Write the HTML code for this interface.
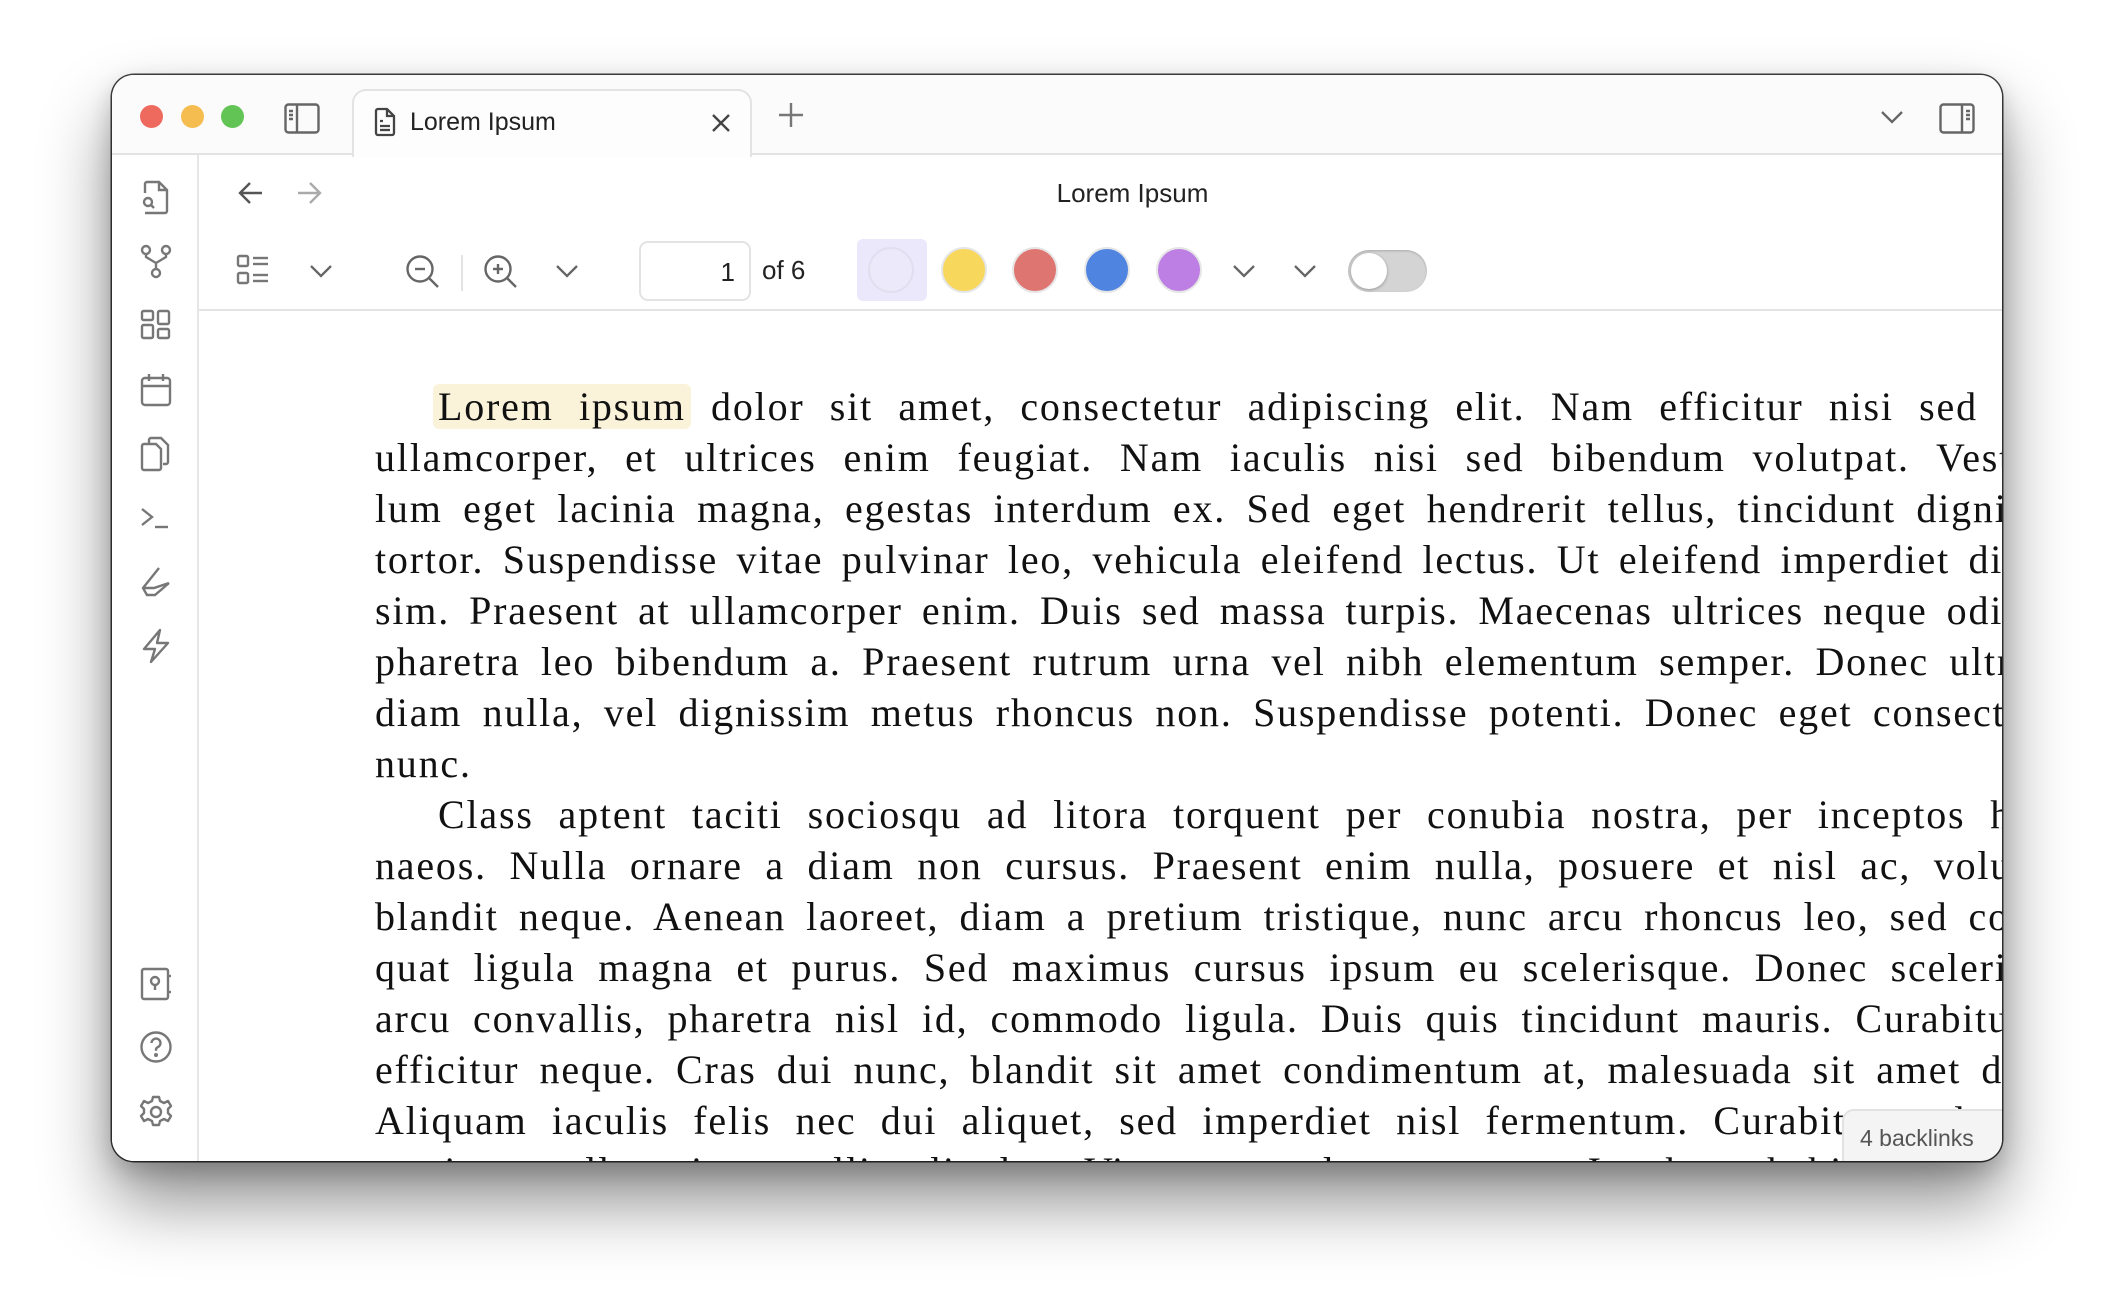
<!DOCTYPE html>
<html><head><meta charset="utf-8">
<style>
*{margin:0;padding:0;box-sizing:border-box}
html,body{width:2114px;height:1310px;background:#fff;overflow:hidden;font-family:"Liberation Sans",sans-serif}
.win{position:absolute;left:112px;top:75px;width:1890px;height:1086px;border-radius:22px;background:#fff;overflow:hidden;box-shadow:0 0 0 1.5px rgba(0,0,0,.75),0 40px 70px rgba(0,0,0,.45),0 10px 25px rgba(0,0,0,.2)}
.tabbar{position:absolute;left:0;top:0;width:100%;height:80px;background:#fbfbfb;border-bottom:2px solid #e3e3e3}
.dot{position:absolute;top:30px;width:23px;height:23px;border-radius:50%}
.tab{position:absolute;left:240px;top:14px;width:400px;height:68px;background:#fdfdfd;border:2px solid #e3e3e3;border-bottom:none;border-radius:14px 14px 0 0}
.tab span{position:absolute;left:56px;top:17px;font-size:25px;color:#222}
.rib{position:absolute;left:0;top:80px;width:87px;bottom:0;border-right:2px solid #e6e6e6;background:#fff}
.ic{position:absolute}
svg{overflow:visible}
.nav{position:absolute;left:87px;top:80px;right:0;height:156px;border-bottom:2px solid #e3e3e3}
.title{position:absolute;left:0;right:0;top:23px;text-align:center;font-size:26px;color:#222;padding-left:64px}
.txt{position:absolute;left:263px;top:0;font-family:"Liberation Serif",serif;font-size:40px;color:#111;letter-spacing:1.8px}
.l{position:absolute;left:0;width:1650px;white-space:nowrap;text-align:justify;text-align-last:justify;line-height:51px;height:51px}
.hl{background:#fbf3d9;border-radius:6px;padding:0 5px;margin:0 -5px}
.bl{position:absolute;left:1730px;top:1034px;width:170px;height:60px;background:#f4f4f4;border:2px solid #e2e2e2;border-radius:12px 0 0 0;font-size:23px;color:#555;padding:14px 0 0 16px}
.sw{position:absolute;width:46px;height:46px;border-radius:50%;border:2px solid #e6e6e6}
</style></head><body>
<div class="win">
 <div class="tabbar">
  <div class="dot" style="left:28px;background:#ee6a5f"></div>
  <div class="dot" style="left:69px;background:#f5bd4f"></div>
  <div class="dot" style="left:109px;background:#61c454"></div>
  <svg class="ic" style="left:172px;top:28px" width="36" height="32" viewBox="0 0 36 32" fill="none" stroke="#666" stroke-width="2.4"><rect x="1.5" y="1.5" width="33" height="28" rx="3"/><line x1="13" y1="2" x2="13" y2="29"/><line x1="5" y1="8" x2="9" y2="8"/><line x1="5" y1="12" x2="9" y2="12"/><line x1="5" y1="16" x2="9" y2="16"/></svg>
  <div class="tab">
   <svg class="ic" style="left:20px;top:17px" width="22" height="28" viewBox="0 0 22 28" fill="none" stroke="#444" stroke-width="2.3"><path d="M2 3a2 2 0 0 1 2-2h9l7 7v17a2 2 0 0 1-2 2H4a2 2 0 0 1-2-2z"/><path d="M13 1v7h7"/><line x1="6" y1="13" x2="9" y2="13"/><line x1="6" y1="18" x2="16" y2="18"/><line x1="6" y1="22" x2="16" y2="22"/></svg>
   <span>Lorem Ipsum</span>
   <svg class="ic" style="left:357px;top:22px" width="20" height="20" viewBox="0 0 20 20" stroke="#444" stroke-width="2.4"><line x1="2" y1="2" x2="18" y2="18"/><line x1="18" y1="2" x2="2" y2="18"/></svg>
  </div>
  <svg class="ic" style="left:666px;top:27px" width="26" height="26" viewBox="0 0 26 26" stroke="#777" stroke-width="2.4"><line x1="13" y1="1" x2="13" y2="25"/><line x1="1" y1="13" x2="25" y2="13"/></svg>
  <svg class="ic" style="left:1769px;top:35px" width="22" height="14" viewBox="0 0 22 14" fill="none" stroke="#666" stroke-width="2.3"><path d="M1 2l10 10 10-10"/></svg>
  <svg class="ic" style="left:1827px;top:28px" width="36" height="32" viewBox="0 0 36 32" fill="none" stroke="#666" stroke-width="2.4"><rect x="1.5" y="1.5" width="33" height="28" rx="3"/><line x1="23" y1="2" x2="23" y2="29"/><line x1="27" y1="8" x2="31" y2="8"/><line x1="27" y1="12" x2="31" y2="12"/><line x1="27" y1="16" x2="31" y2="16"/></svg>
 </div>
 <div class="rib">
  <svg class="ic" style="left:29px;top:26px" width="30" height="34" viewBox="0 0 30 34" fill="none" stroke="#777" stroke-width="2.4"><path d="M4 12V3a2 2 0 0 1 2-2h12l8 8v21a2 2 0 0 1-2 2H4"/><path d="M18 1v8h8"/><circle cx="7" cy="21" r="4"/><line x1="10" y1="24" x2="13" y2="27"/></svg>
  <svg class="ic" style="left:28px;top:90px" width="32" height="34" viewBox="0 0 32 34" fill="none" stroke="#777" stroke-width="2.4"><circle cx="6" cy="5" r="4"/><circle cx="26" cy="5" r="4"/><circle cx="16" cy="28" r="4"/><path d="M6 9v3l10 6 10-6V9M16 18v6"/></svg>
  <svg class="ic" style="left:29px;top:155px" width="30" height="30" viewBox="0 0 30 30" fill="none" stroke="#777" stroke-width="2.4"><rect x="1" y="1" width="11" height="9" rx="1.5"/><rect x="17" y="1" width="11" height="13" rx="1.5"/><rect x="1" y="15" width="11" height="13" rx="1.5"/><rect x="17" y="19" width="11" height="9" rx="1.5"/></svg>
  <svg class="ic" style="left:29px;top:219px" width="30" height="32" viewBox="0 0 30 32" fill="none" stroke="#777" stroke-width="2.4"><rect x="1" y="4" width="28" height="27" rx="3"/><line x1="1" y1="12" x2="29" y2="12"/><line x1="8" y1="0" x2="8" y2="7"/><line x1="22" y1="0" x2="22" y2="7"/></svg>
  <svg class="ic" style="left:29px;top:282px" width="28" height="34" viewBox="0 0 28 34" fill="none" stroke="#777" stroke-width="2.4"><path d="M8 6V3a2 2 0 0 1 2-2h10l7 7v17a2 2 0 0 1-2 2h-3"/><path d="M1 9a2 2 0 0 1 2-2h12l5 5v19a2 2 0 0 1-2 2H3a2 2 0 0 1-2-2z"/></svg>
  <svg class="ic" style="left:29px;top:352px" width="28" height="22" viewBox="0 0 28 22" fill="none" stroke="#777" stroke-width="2.4"><path d="M1 2l10 8-10 8"/><line x1="14" y1="20" x2="27" y2="20"/></svg>
  <svg class="ic" style="left:29px;top:412px" width="30" height="30" viewBox="0 0 30 30" fill="none" stroke="#777" stroke-width="2.4"><path d="M18 1L2 21l4 7h8l14-12"/><path d="M2 21h11l15-5"/></svg>
  <svg class="ic" style="left:31px;top:474px" width="26" height="34" viewBox="0 0 26 34" fill="none" stroke="#777" stroke-width="2.4" stroke-linejoin="round"><path d="M17 1L1 20h11l-4 13 17-19H14z"/></svg>
  <svg class="ic" style="left:29px;top:813px" width="30" height="32" viewBox="0 0 30 32" fill="none" stroke="#777" stroke-width="2.4"><rect x="1" y="1" width="26" height="30" rx="2"/><circle cx="14" cy="13" r="4"/><line x1="14" y1="17" x2="14" y2="22"/><line x1="27" y1="8" x2="30" y2="8"/><line x1="27" y1="24" x2="30" y2="24"/></svg>
  <svg class="ic" style="left:28px;top:876px" width="32" height="32" viewBox="0 0 32 32" fill="none" stroke="#777" stroke-width="2.4"><circle cx="16" cy="16" r="14.5"/><path d="M11.5 12a4.5 4.5 0 1 1 6 4.3c-1 .5-1.5 1.3-1.5 2.5v1"/><circle cx="16" cy="24" r=".8" fill="#777"/></svg>
  <svg class="ic" style="left:28px;top:941px" width="32" height="32" viewBox="0 0 32 32" fill="none" stroke="#777" stroke-width="2.4" stroke-linejoin="round"><path d="M13 1h6l1 4 4 2 4-2 3 5-3 3v4l3 3-3 5-4-2-4 2-1 4h-6l-1-4-4-2-4 2-3-5 3-3v-4L1 10l3-5 4 2 4-2z"/><circle cx="16" cy="16" r="5"/></svg>
 </div>
 <div class="nav">
  <svg class="ic" style="left:40px;top:27px" width="24" height="22" viewBox="0 0 24 22" fill="none" stroke="#555" stroke-width="2.4"><path d="M11 1L1 11l10 10M1 11h22"/></svg>
  <svg class="ic" style="left:98px;top:27px" width="24" height="22" viewBox="0 0 24 22" fill="none" stroke="#aaa" stroke-width="2.4"><path d="M13 1l10 10-10 10M23 11H1"/></svg>
  <div class="title">Lorem Ipsum</div>
  <svg class="ic" style="left:1851px;top:30px" width="26" height="6" viewBox="0 0 26 6" fill="#666"><circle cx="3" cy="3" r="2.6"/><circle cx="13" cy="3" r="2.6"/><circle cx="23" cy="3" r="2.6"/></svg>
  <svg class="ic" style="left:38px;top:100px" width="32" height="30" viewBox="0 0 32 30" fill="none" stroke="#777" stroke-width="2.4"><rect x="1" y="1" width="10" height="10" rx="1.5"/><rect x="1" y="18" width="10" height="10" rx="1.5"/><line x1="16" y1="3" x2="31" y2="3"/><line x1="16" y1="9" x2="31" y2="9"/><line x1="16" y1="20" x2="31" y2="20"/><line x1="16" y1="26" x2="31" y2="26"/></svg>
  <svg class="ic" style="left:111px;top:109px" width="22" height="14" viewBox="0 0 22 14" fill="none" stroke="#666" stroke-width="2.3"><path d="M1 2l10 10 10-10"/></svg>
  <svg class="ic" style="left:207px;top:100px" width="34" height="34" viewBox="0 0 34 34" fill="none" stroke="#666" stroke-width="2.4"><circle cx="14" cy="14" r="12.5"/><line x1="23" y1="23" x2="32" y2="32"/><line x1="9" y1="14" x2="19" y2="14"/></svg>
  <div style="position:absolute;left:262px;top:100px;width:2px;height:36px;background:#e3e3e3"></div>
  <svg class="ic" style="left:285px;top:100px" width="34" height="34" viewBox="0 0 34 34" fill="none" stroke="#666" stroke-width="2.4"><circle cx="14" cy="14" r="12.5"/><line x1="23" y1="23" x2="32" y2="32"/><line x1="9" y1="14" x2="19" y2="14"/><line x1="14" y1="9" x2="14" y2="19"/></svg>
  <svg class="ic" style="left:357px;top:109px" width="22" height="14" viewBox="0 0 22 14" fill="none" stroke="#666" stroke-width="2.3"><path d="M1 2l10 10 10-10"/></svg>
  <div style="position:absolute;left:440px;top:86px;width:112px;height:60px;border:2px solid #e3e3e3;border-radius:9px;font-size:26px;color:#222;text-align:right;padding:14px 14px 0 0">1</div>
  <div style="position:absolute;left:563px;top:100px;font-size:26px;color:#222">of 6</div>
  <div style="position:absolute;left:658px;top:84px;width:70px;height:62px;background:#ebe8fb;border-radius:6px"></div>
  <div class="sw" style="left:669px;top:92px;border-color:#e2def0;background:#ece9fb"></div>
  <div class="sw" style="left:742px;top:92px;background:#f7d75c"></div>
  <div class="sw" style="left:813px;top:92px;background:#df7570"></div>
  <div class="sw" style="left:885px;top:92px;background:#4f84e0"></div>
  <div class="sw" style="left:957px;top:92px;background:#bd7fe3"></div>
  <svg class="ic" style="left:1034px;top:109px" width="22" height="14" viewBox="0 0 22 14" fill="none" stroke="#666" stroke-width="2.3"><path d="M1 2l10 10 10-10"/></svg>
  <svg class="ic" style="left:1095px;top:109px" width="22" height="14" viewBox="0 0 22 14" fill="none" stroke="#666" stroke-width="2.3"><path d="M1 2l10 10 10-10"/></svg>
  <div style="position:absolute;left:1149px;top:95px;width:79px;height:42px;border-radius:21px;background:#d4d4d4;box-shadow:inset 0 1px 2px rgba(0,0,0,.2)"><div style="position:absolute;left:3px;top:3px;width:36px;height:36px;border-radius:50%;background:#fff;box-shadow:0 1px 3px rgba(0,0,0,.3)"></div></div>
 </div>
 <div class="txt">
  <div class="l" style="top:306px;left:63px;width:1587px"><span class="hl">Lorem ipsum</span> dolor sit amet, consectetur adipiscing elit. Nam efficitur nisi sed n</div>
  <div class="l" style="top:357px">ullamcorper, et ultrices enim feugiat. Nam iaculis nisi sed bibendum volutpat. Vesti</div>
  <div class="l" style="top:408px">lum eget lacinia magna, egestas interdum ex. Sed eget hendrerit tellus, tincidunt dignis</div>
  <div class="l" style="top:459px">tortor. Suspendisse vitae pulvinar leo, vehicula eleifend lectus. Ut eleifend imperdiet dig</div>
  <div class="l" style="top:510px">sim. Praesent at ullamcorper enim. Duis sed massa turpis. Maecenas ultrices neque odio</div>
  <div class="l" style="top:561px">pharetra leo bibendum a. Praesent rutrum urna vel nibh elementum semper. Donec ultri</div>
  <div class="l" style="top:612px">diam nulla, vel dignissim metus rhoncus non. Suspendisse potenti. Donec eget consecte</div>
  <div class="l" style="top:663px;text-align:left;text-align-last:left">nunc.</div>
  <div class="l" style="top:714px;left:63px;width:1587px">Class aptent taciti sociosqu ad litora torquent per conubia nostra, per inceptos hi</div>
  <div class="l" style="top:765px">naeos. Nulla ornare a diam non cursus. Praesent enim nulla, posuere et nisl ac, volut</div>
  <div class="l" style="top:816px">blandit neque. Aenean laoreet, diam a pretium tristique, nunc arcu rhoncus leo, sed cor</div>
  <div class="l" style="top:867px">quat ligula magna et purus. Sed maximus cursus ipsum eu scelerisque. Donec sceleris</div>
  <div class="l" style="top:918px">arcu convallis, pharetra nisl id, commodo ligula. Duis quis tincidunt mauris. Curabitur</div>
  <div class="l" style="top:969px">efficitur neque. Cras dui nunc, blandit sit amet condimentum at, malesuada sit amet do</div>
  <div class="l" style="top:1020px">Aliquam iaculis felis nec dui aliquet, sed imperdiet nisl fermentum. Curabitur sed ut</div>
  <div class="l" style="top:1071px">pretium tellus in, mollis ligula. Vivamus vulputate est. In hac habitasse pla</div>
 </div>
 <div class="bl">4 backlinks</div>
</div>
</body></html>
